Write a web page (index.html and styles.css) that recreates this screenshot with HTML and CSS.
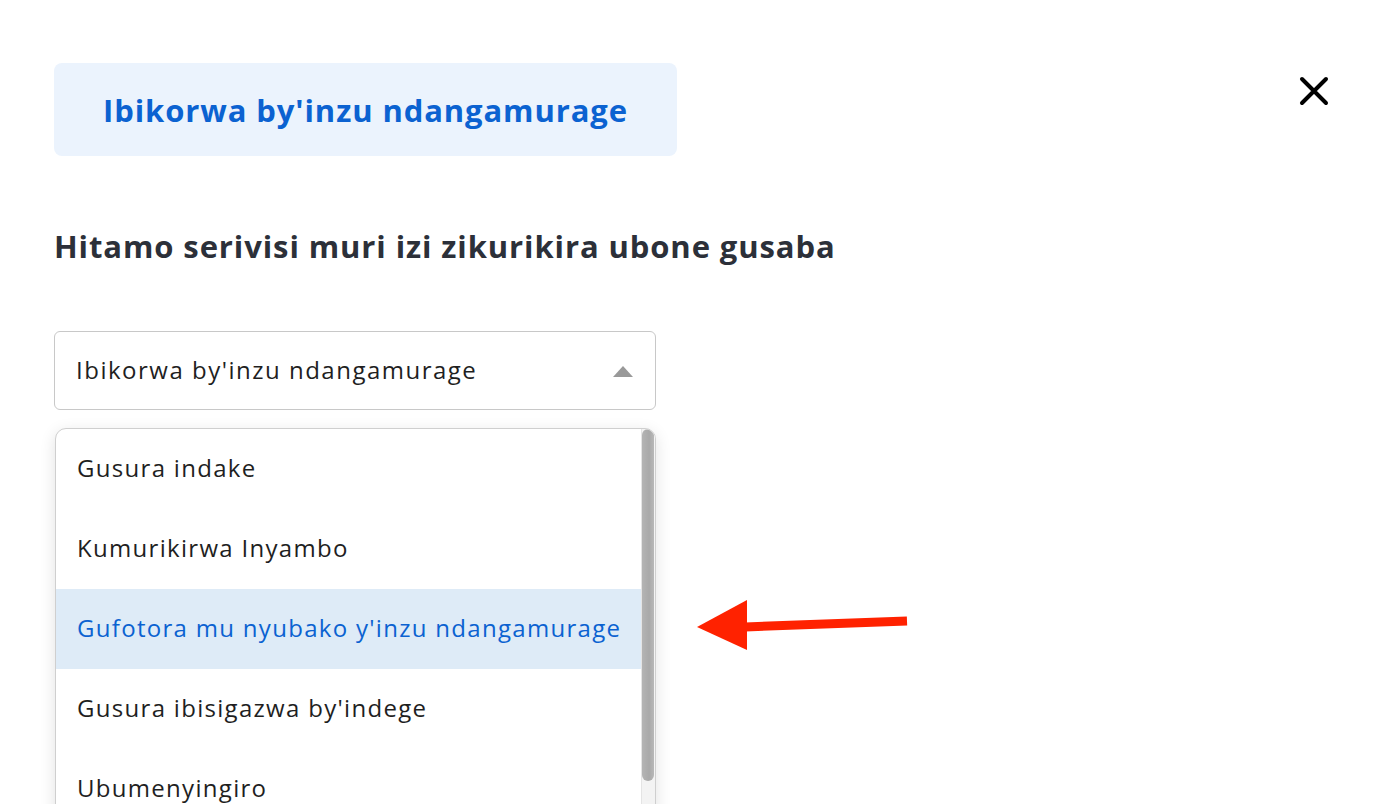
FILE: index.html
```html
<!DOCTYPE html>
<html lang="en">
<head>
    <meta charset="UTF-8">
    <meta name="viewport" content="width=device-width, initial-scale=1.0">
    <title>Serivisi</title>
    <link rel="stylesheet" href="styles.css">
</head>
<body>
    <div class="page">
        <div class="top-row">
            <div class="tab-title">Ibikorwa by'inzu ndangamurage</div>
            <button class="close-button" aria-label="Close">
                <svg width="32" height="32" viewBox="0 0 32 32">
                    <path d="M4 4 L28 28 M28 4 L4 28" stroke="#000" stroke-width="4" stroke-linecap="round"/>
                </svg>
            </button>
        </div>

        <h2 class="prompt">Hitamo serivisi muri izi zikurikira ubone gusaba</h2>

        <div class="select-wrapper">
            <div class="select-box">
                <span>Ibikorwa by'inzu ndangamurage</span>
                <span class="caret"></span>
            </div>

            <!-- Open option list -->
            <div class="dropdown">
                <div class="options">
                    <div class="option">Gusura indake</div>
                    <div class="option">Kumurikirwa Inyambo</div>
                    <div class="option selected">Gufotora mu nyubako y'inzu ndangamurage</div>
                    <div class="option">Gusura ibisigazwa by'indege</div>
                    <div class="option">Ubumenyingiro</div>
                </div>
                <div class="scrollbar">
                    <div class="thumb"></div>
                </div>
            </div>
        </div>
    </div>

    <!-- Annotation arrow -->
    <svg class="pointer-arrow" width="220" height="60" viewBox="0 0 220 60">
        <path d="M210 21 L48 27" stroke="#ff2200" stroke-width="9"/>
        <polygon points="0,27 50,0 50,50" fill="#ff2200"/>
    </svg>
</body>
</html>
```

FILE: styles.css
```css
body {
    margin: 0;
    background-color: #fff;
    font-family: "Open Sans", "Lato", sans-serif;
    overflow: hidden;
    height: 804px;
}

.page {
    padding: 63px 54px 0 54px;
}

.top-row {
    display: flex;
    justify-content: space-between;
    align-items: flex-start;
}

.tab-title {
    width: 623px;
    height: 93px;
    background-color: #ebf3fd;
    border-radius: 8px;
    color: #0b62d1;
    font-size: 31px;
    font-weight: 700;
    display: flex;
    justify-content: center;
    align-items: center;
    letter-spacing: 0.9px;
}

.close-button {
    border: none;
    background: transparent;
    padding: 0;
    margin-top: 12px;
    width: 32px;
    height: 32px;
    cursor: pointer;
}

.prompt {
    margin: 70px 0 0 0;
    font-size: 31px;
    font-weight: 700;
    color: #2c3039;
    line-height: 40px;
    letter-spacing: 0.9px;
}

.select-wrapper {
    position: relative;
    width: 602px;
    margin-top: 65px;
}

.select-box {
    box-sizing: border-box;
    height: 79px;
    border: 1px solid #c8c8c8;
    border-radius: 6px;
    display: flex;
    align-items: center;
    justify-content: space-between;
    padding: 0 22px 2px 21px;
    font-size: 24px;
    letter-spacing: 1.5px;
    color: #1f1f1f;
}

.caret {
    width: 0;
    height: 0;
    border-left: 10px solid transparent;
    border-right: 10px solid transparent;
    border-bottom: 11px solid #999;
    margin-top: 4px;
}

.dropdown {
    position: absolute;
    top: 97px;
    left: 1px;
    width: 599px;
    height: 400px;
    border: 1px solid #cfcfcf;
    border-radius: 11px 11px 0 0;
    background-color: #fff;
    box-shadow: 0 4px 16px rgba(0, 0, 0, 0.12);
    display: flex;
    overflow: hidden;
}

.options {
    flex: 1;
}

.option {
    height: 80px;
    box-sizing: border-box;
    display: flex;
    align-items: center;
    padding: 0 0 3px 21px;
    font-size: 24px;
    letter-spacing: 1.3px;
    color: #1f1f1f;
}

.option.selected {
    background-color: #deebf7;
    color: #0b62d1;
}

.scrollbar {
    width: 13px;
    background-color: #f3f3f3;
    border-left: 1px solid #e4e4e4;
}

.thumb {
    height: 352px;
    margin: 0 1px 0 0;
    border-radius: 6px;
    background: linear-gradient(to right, #b4b4b4, #a9a9a9 60%, #b8b8b8);
}

.pointer-arrow {
    position: absolute;
    left: 697px;
    top: 600px;
}
```
